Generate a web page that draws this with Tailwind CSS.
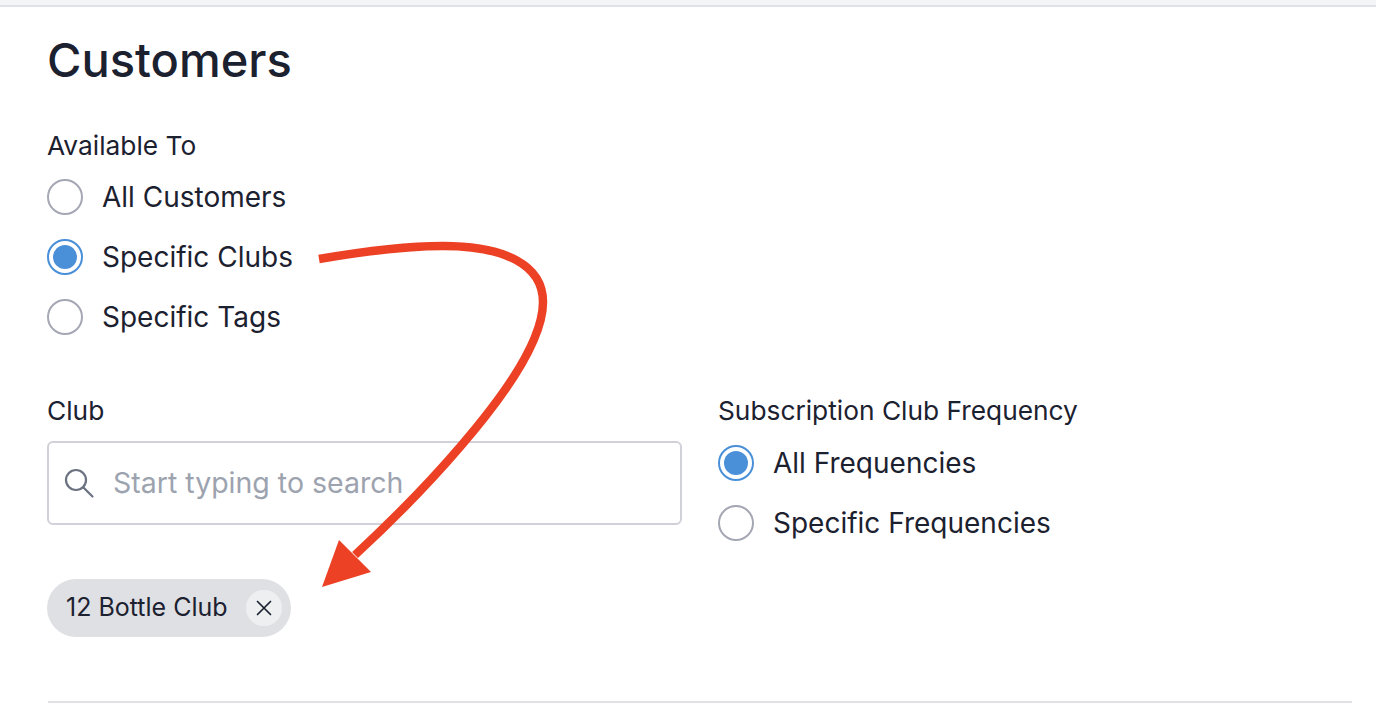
<!DOCTYPE html>
<html lang="en">
<head>
  <meta charset="UTF-8" />
  <title>Customers</title>
  <script src="https://cdn.jsdelivr.net/npm/@tailwindcss/browser@4"></script>
</head>
<body class="relative h-[725px] overflow-hidden bg-white font-['Inter',sans-serif] text-[#1c2130]">
  <div class="h-[7px] bg-[#f4f5f7] border-b-2 border-[#dfe0e8]"></div>

  <main class="pl-[47px] pr-6">
    <h1 class="mt-[23px] h-[60px] text-[47px] leading-[60px] font-medium">Customers</h1>

    <p class="mt-[38px] text-[26.3px] leading-[36px]">Available To</p>
    <div class="mt-[15px] flex flex-col gap-6">
      <label class="flex h-9 items-center gap-[19px] text-[28px]">
        <span class="size-9 rounded-full border-2 border-[#a5a8b4]"></span>
        All Customers
      </label>
      <label class="flex h-9 items-center gap-[19px] text-[28px]">
        <span class="flex size-9 items-center justify-center rounded-full border-2 border-[#4a90d9]"><span class="size-6 rounded-full bg-[#4a90d9]"></span></span>
        Specific Clubs
      </label>
      <label class="flex h-9 items-center gap-[19px] text-[28px]">
        <span class="size-9 rounded-full border-2 border-[#a5a8b4]"></span>
        Specific Tags
      </label>
    </div>

    <div class="mt-[58px] flex">
      <section class="w-[671px]">
        <p class="text-[26.3px] leading-[36px]">Club</p>
        <div class="mt-3 flex h-[84px] w-[635px] items-center rounded-md border-2 border-[#d0d1d9] pl-[14px]">
          <svg class="size-8 text-[#6b7280]" viewBox="0 0 32 32" fill="none" stroke="currentColor" stroke-width="2.2" stroke-linecap="round">
            <circle cx="13" cy="13" r="10" />
            <path d="M20.5 20.5l9 9" />
          </svg>
          <span class="ml-[18px] text-[28.5px] text-[#9ca3af]">Start typing to search</span>
        </div>
        <div class="mt-[54px] flex h-[58px] w-[244px] items-center justify-between rounded-full bg-[#dfe0e4] pl-[19px] pr-[9px]">
          <span class="text-[25px]">12 Bottle Club</span>
          <span class="flex size-9 items-center justify-center rounded-full bg-[#eeeff1]">
            <svg class="size-4" viewBox="0 0 16 16" fill="none" stroke="#1c2130" stroke-width="1.7" stroke-linecap="round"><path d="M1.5 1.5l13 13M14.5 1.5l-13 13" /></svg>
          </span>
        </div>
      </section>
      <section>
        <p class="text-[26.3px] leading-[36px]">Subscription Club Frequency</p>
        <div class="mt-[16px] flex flex-col gap-6">
          <label class="flex h-9 items-center gap-[19px] text-[28px]">
            <span class="flex size-9 items-center justify-center rounded-full border-2 border-[#4a90d9]"><span class="size-6 rounded-full bg-[#4a90d9]"></span></span>
            All Frequencies
          </label>
          <label class="flex h-9 items-center gap-[19px] text-[28px]">
            <span class="size-9 rounded-full border-2 border-[#a5a8b4]"></span>
            Specific Frequencies
          </label>
        </div>
      </section>
    </div>

    <hr class="ml-px mt-[64px] border-t-2 border-[#e0e1e6]" />
  </main>

  <!-- red annotation arrow drawn over the form -->
  <svg class="absolute left-0 top-0 h-[725px] w-[1376px]" viewBox="0 0 1376 725" fill="none">
    <path d="M319 259C360 252 405 246 443 246C505 246 543 265 543 302C543 340 505 395 460 447C430 482 395 518 355 555" stroke="#ec4124" stroke-width="8.5" />
    <path d="M322 587L339 540L371 572Z" fill="#ec4124" />
  </svg>
</body>
</html>
